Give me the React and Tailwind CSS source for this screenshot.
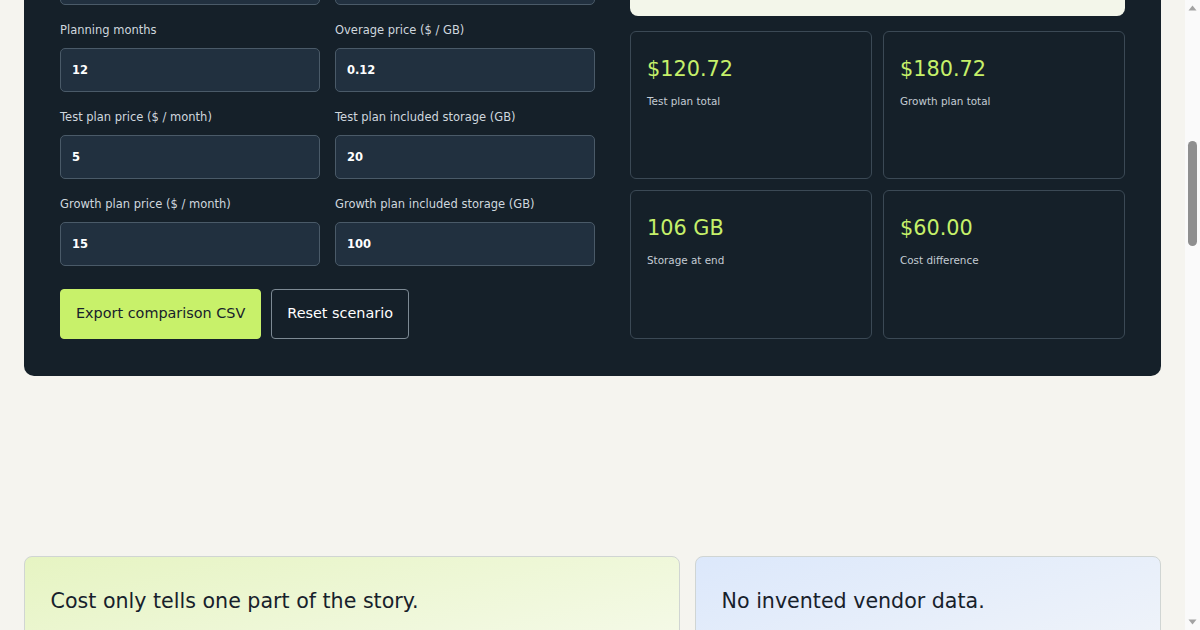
import React, { useLayoutEffect, useEffect, useRef } from "react";

function Field({ label, value, anchorRef }) {
  return (
    <div className="flex flex-col" ref={anchorRef}>
      <label className="mb-[9px] text-[11.5px] leading-[18px] text-[#cfd7de]">{label}</label>
      <input
        readOnly
        defaultValue={value}
        className="h-[44px] w-full rounded-[5px] border border-[#4a5a68] bg-[#21303f] px-[11px] text-[11.5px] font-bold text-white outline-none"
      />
    </div>
  );
}

function Stat({ value, label }) {
  return (
    <div className="rounded-[6px] border border-[#3b4955] bg-[#152029] px-4 pt-[22px]">
      <div className="text-[20.8px] leading-[31px] text-[#c6f06a]">{value}</div>
      <div className="mt-[9px] text-[10.4px] leading-[15px] text-[#c4ccd4]">{label}</div>
    </div>
  );
}

function ScrollbarDrawing() {
  return (
    <svg className="fixed right-0 top-0" width="15" height="630" viewBox="0 0 15 630">
      <rect x="0" y="0" width="15" height="630" fill="#fafafa" />
      <polygon points="3.5,10.5 7.5,5.5 11.5,10.5" fill="#a3a3a3" />
      <polygon points="3.5,619.5 7.5,624.5 11.5,619.5" fill="#a3a3a3" />
      <rect x="3" y="141" width="9" height="105" rx="4.5" fill="#8f8f8f" />
    </svg>
  );
}

export default function App() {
  const anchor = useRef(null);

  const doScroll = () => {
    const el = anchor.current;
    if (!el) return;
    const y = el.getBoundingClientRect().top + window.scrollY - 21;
    window.scrollTo(0, y);
  };

  useLayoutEffect(() => {
    doScroll();
  }, []);
  useEffect(() => {
    doScroll();
    const id = requestAnimationFrame(doScroll);
    return () => cancelAnimationFrame(id);
  }, []);

  return (
    <div className="min-h-[3635px] bg-[#f5f4ef] font-['DejaVu_Sans',sans-serif] text-[#17212b]">
      <div className="mr-[15px]">
        {/* Header (above the fold) */}
        <header className="flex h-[72px] items-center justify-between px-6">
          <div className="text-[18px] font-bold">Plan Compare</div>
          <nav className="flex gap-6 text-[13px] text-[#3a4650]">
            <span>Calculator</span>
            <span>Method</span>
            <span>FAQ</span>
          </nav>
        </header>

        {/* Hero (above the fold) */}
        <section className="px-6 pb-[60px] pt-[70px]">
          <p className="text-[12px] uppercase tracking-widest text-[#5b6770]">Storage cost calculator</p>
          <h1 className="mt-4 max-w-[760px] text-[44px] leading-[1.15]">Compare two storage plans over your own planning horizon.</h1>
          <p className="mt-5 max-w-[640px] text-[15px] leading-[1.6] text-[#44515b]">
            Enter the prices and storage allowances you were quoted, describe how your data grows, and see what each plan
            costs month by month.
          </p>
        </section>

        {/* Dark calculator panel */}
        <div className="px-6">
          <section className="grid grid-cols-[535px_1fr] gap-x-[35px] rounded-[10px] bg-[#152029] px-[36px] pb-[37px] pt-[36px]">
            <div className="flex flex-col">
              <h2 className="text-[22px] leading-[30px] text-white">Scenario inputs</h2>
              <p className="mb-[24px] mt-2 text-[12px] leading-[18px] text-[#aeb8c0]">
                All values are yours. Nothing is pre-filled from a vendor price list.
              </p>
              <div className="grid grid-cols-2 gap-x-[15px] gap-y-[16px]">
                <Field label="Current storage (GB)" value="10" />
                <Field label="Monthly growth (GB)" value="8" />
                <Field label="Planning months" value="12" anchorRef={anchor} />
                <Field label="Overage price ($ / GB)" value="0.12" />
                <Field label="Test plan price ($ / month)" value="5" />
                <Field label="Test plan included storage (GB)" value="20" />
                <Field label="Growth plan price ($ / month)" value="15" />
                <Field label="Growth plan included storage (GB)" value="100" />
              </div>
              <div className="mt-[23px] flex gap-[10px]">
                <button className="h-[50px] rounded-[4px] border border-[#c8f16a] bg-[#c8f16a] px-[15px] text-[14.4px] text-[#17212b]">
                  Export comparison CSV
                </button>
                <button className="h-[50px] rounded-[4px] border border-[#7d8a94] bg-transparent px-[15px] text-[14.4px] text-white">
                  Reset scenario
                </button>
              </div>
            </div>

            <div className="flex flex-col gap-[15px]">
              <div className="flex flex-1 flex-col justify-center rounded-[8px] bg-[#f3f6ea] px-6 py-6">
                <p className="text-[11px] uppercase tracking-widest text-[#5b6770]">Result</p>
                <p className="mt-2 text-[20px] leading-[1.3] text-[#17212b]">Test plan is cheaper by $60.00 over 12 months.</p>
              </div>
              <div className="grid grid-cols-2 grid-rows-[148px_149px] gap-[11px]">
                <Stat value="$120.72" label="Test plan total" />
                <Stat value="$180.72" label="Growth plan total" />
                <Stat value="106 GB" label="Storage at end" />
                <Stat value="$60.00" label="Cost difference" />
              </div>
            </div>
          </section>

          {/* Notes */}
          <section className="mt-[180px] grid grid-cols-[656px_1fr] gap-[15px]">
            <div className="rounded-[8px] border border-[#d0d5d3] bg-gradient-to-br from-[#e6f4c2] to-[#f9fbf2] px-[25.6px] pb-[32px] pt-[31px]">
              <h3 className="text-[20.6px] leading-[26px] text-[#17212b]">Cost only tells one part of the story.</h3>
              <p className="mt-4 text-[13px] leading-[1.6] text-[#3e4a54]">
                Support, egress, durability and migration effort matter too. Use the totals as one input to the decision.
              </p>
            </div>
            <div className="rounded-[8px] border border-[#d0d5d3] bg-gradient-to-br from-[#dce8fb] to-[#f4f6f9] px-[25.6px] pb-[32px] pt-[31px]">
              <h3 className="text-[20.6px] leading-[26px] text-[#17212b]">No invented vendor data.</h3>
              <p className="mt-4 text-[13px] leading-[1.6] text-[#3e4a54]">
                Every number comes from the scenario you entered above.
              </p>
            </div>
          </section>
        </div>
      </div>
      <ScrollbarDrawing />
    </div>
  );
}
